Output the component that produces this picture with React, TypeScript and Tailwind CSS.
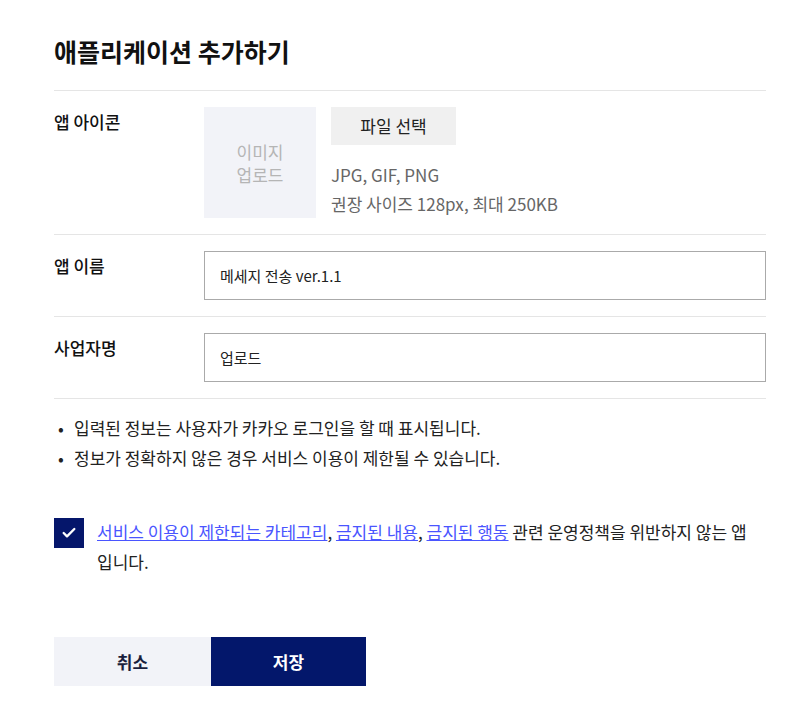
import React, { useState } from 'react';
import { Check } from 'lucide-react';

const font = { fontFamily: '"Noto Sans CJK KR", "Noto Sans", sans-serif' };

const FormRow: React.FC<{ label: string; children: React.ReactNode }> = ({ label, children }) => (
  <div className="flex border-b border-[#e5e5e5] py-4">
    <div className="w-[150px] shrink-0 pt-[3px] text-[17px] leading-6 font-medium text-[#111]">{label}</div>
    <div className="flex-1">{children}</div>
  </div>
);

export default function App() {
  const [name, setName] = useState('메세지 전송 ver.1.1');
  const [company, setCompany] = useState('업로드');
  const [agreed, setAgreed] = useState(true);

  return (
    <div className="min-h-screen bg-white" style={font}>
      <div className="pl-[54px] pr-[42px] pt-[33px]">
        <h1 className="text-[25px] leading-9 font-bold text-[#111] pb-[21px] border-b border-[#e5e5e5]">
          애플리케이션 추가하기
        </h1>

        {/* 앱 아이콘 */}
        <FormRow label="앱 아이콘">
          <div className="flex">
            <div className="w-[112px] h-[111px] bg-[#f2f3f8] flex items-center justify-center text-center text-[17px] leading-[23px] text-[#b5b5b5]">
              이미지
              <br />
              업로드
            </div>
            <div className="ml-[15px]">
              <button
                type="button"
                className="w-[125px] h-[38px] bg-[#f0f0f0] text-[17px] text-[#222]"
              >
                파일 선택
              </button>
              <p className="mt-[15px] text-[17px] leading-[29px] text-[#666]">
                JPG, GIF, PNG
                <br />
                권장 사이즈 128px, 최대 250KB
              </p>
            </div>
          </div>
        </FormRow>

        {/* 앱 이름 */}
        <FormRow label="앱 이름">
          <input
            value={name}
            onChange={(e) => setName(e.target.value)}
            className="w-full h-[49px] border border-[#aaa] px-[15px] text-[15px] text-[#222] outline-none"
          />
        </FormRow>

        {/* 사업자명 */}
        <FormRow label="사업자명">
          <input
            value={company}
            onChange={(e) => setCompany(e.target.value)}
            className="w-full h-[49px] border border-[#aaa] px-[15px] text-[15px] text-[#222] outline-none"
          />
        </FormRow>

        <ul className="pt-[14px] text-[17px] leading-[30px] text-[#222]">
          <li className="flex">
            <span className="w-[20px] pl-[4px]">•</span>입력된 정보는 사용자가 카카오 로그인을 할 때 표시됩니다.
          </li>
          <li className="flex">
            <span className="w-[20px] pl-[4px]">•</span>정보가 정확하지 않은 경우 서비스 이용이 제한될 수 있습니다.
          </li>
        </ul>

        <div className="flex mt-[45px]">
          <button
            type="button"
            onClick={() => setAgreed(!agreed)}
            className="w-[30px] h-[30px] shrink-0 bg-[#05166b] flex items-center justify-center"
          >
            {agreed && <Check className="w-4 h-4 text-white" strokeWidth={3.5} />}
          </button>
          <p className="ml-[13px] text-[17px] leading-[30px] text-[#222] -mt-[1px] break-keep">
            <a href="#" className="text-[#4a55ff] underline">서비스 이용이 제한되는 카테고리</a>,{' '}
            <a href="#" className="text-[#4a55ff] underline">금지된 내용</a>,{' '}
            <a href="#" className="text-[#4a55ff] underline">금지된 행동</a> 관련 운영정책을 위반하지 않는 앱 입니다.
          </p>
        </div>

        <div className="flex mt-[60px]">
          <button type="button" className="w-[157px] h-[49px] bg-[#f2f3f8] text-[17px] font-bold text-[#1a1f3d]">
            취소
          </button>
          <button type="button" className="w-[155px] h-[49px] bg-[#03176b] text-[17px] font-bold text-white">
            저장
          </button>
        </div>
      </div>
    </div>
  );
}
